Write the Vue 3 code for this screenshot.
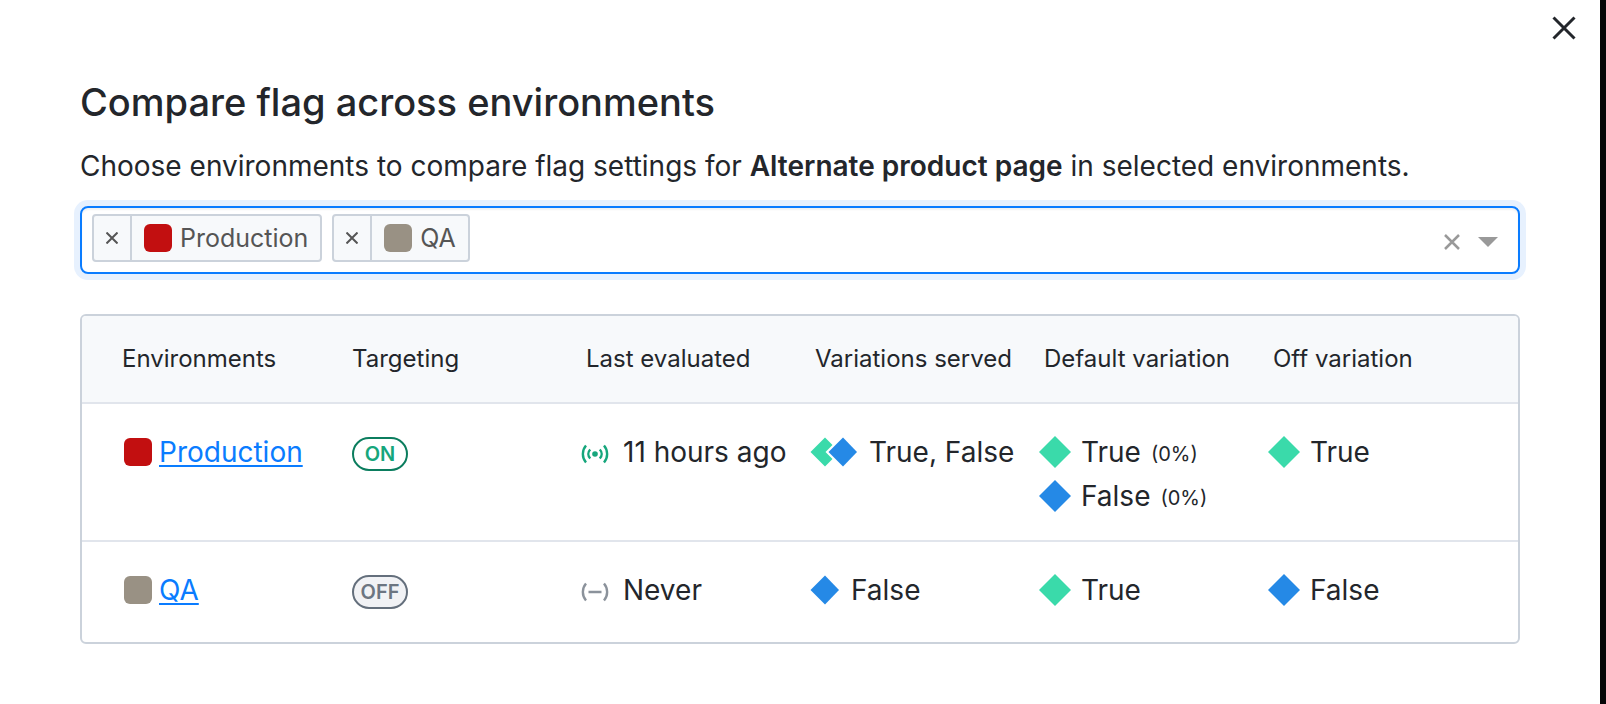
<script setup>
import { ref } from 'vue'

const selected = ref([
  { name: 'Production', tone: 'red' },
  { name: 'QA', tone: 'taupe' },
])

const columns = [
  'Environments',
  'Targeting',
  'Last evaluated',
  'Variations served',
  'Default variation',
  'Off variation',
]

const rows = [
  {
    name: 'Production',
    tone: 'red',
    on: true,
    evaluated: '11 hours ago',
    served: [
      { name: 'True', tone: 'green' },
      { name: 'False', tone: 'blue' },
    ],
    fallthrough: [
      { name: 'True', tone: 'green', share: '(0%)' },
      { name: 'False', tone: 'blue', share: '(0%)' },
    ],
    off: { name: 'True', tone: 'green' },
  },
  {
    name: 'QA',
    tone: 'taupe',
    on: false,
    evaluated: 'Never',
    served: [{ name: 'False', tone: 'blue' }],
    fallthrough: [{ name: 'True', tone: 'green' }],
    off: { name: 'False', tone: 'blue' },
  },
]

function remove(name) {
  selected.value = selected.value.filter((env) => env.name !== name)
}
</script>

<template>
  <main class="dialog" role="dialog" aria-labelledby="title">
    <button class="close" type="button" aria-label="Close">
      <svg viewBox="0 0 24 24" width="24" height="24"><path d="M1.5 1.5 22.5 22.5M22.5 1.5 1.5 22.5" /></svg>
    </button>

    <h1 id="title">Compare flag across environments</h1>
    <label class="intro" for="env-input">
      Choose environments to compare flag settings for
      <strong>Alternate product page</strong> in selected environments.
    </label>

    <div class="select">
      <span v-for="env in selected" :key="env.name" class="chip">
        <button class="chip-remove" type="button" :aria-label="`Remove ${env.name}`" @click="remove(env.name)">
          <svg viewBox="0 0 12 12" width="12" height="12"><path d="M.5.5 11.5 11.5M11.5.5.5 11.5" /></svg>
        </button>
        <span class="chip-label">
          <span class="swatch" :class="env.tone"></span>
          {{ env.name }}
        </span>
      </span>
      <input id="env-input" class="search" type="text" role="combobox" aria-expanded="false" autocomplete="off" />
      <button class="tool" type="button" aria-label="Clear all" @click="selected = []">
        <svg viewBox="0 0 16 16" width="16" height="16"><path d="M1 1 15 15M15 1 1 15" /></svg>
      </button>
      <button class="tool arrow" type="button" aria-label="Open list">
        <svg viewBox="0 0 20 10" width="20" height="10"><path d="M0 0h20L10 10z" /></svg>
      </button>
    </div>

    <div class="frame">
      <table>
        <thead>
          <tr>
            <th v-for="column in columns" :key="column" scope="col">{{ column }}</th>
          </tr>
        </thead>
        <tbody>
          <tr v-for="row in rows" :key="row.name">
            <td>
              <span class="line env">
                <span class="swatch" :class="row.tone"></span>
                <a href="#">{{ row.name }}</a>
              </span>
            </td>
            <td>
              <span class="line targeting">
                <span class="pill" :class="{ on: row.on }">{{ row.on ? 'ON' : 'OFF' }}</span>
              </span>
            </td>
            <td>
              <span class="line evaluated">
                <svg v-if="row.on" class="signal live" viewBox="0 0 28 20" width="28" height="20">
                  <circle cx="14" cy="10" r="2.8" />
                  <path d="M5 1.5C.8 6.5.8 13.5 5 18.5M23 1.5C27.2 6.5 27.2 13.5 23 18.5M9.2 5.5C6.7 8.2 6.7 11.8 9.2 14.5M18.8 5.5C21.3 8.2 21.3 11.8 18.8 14.5" />
                </svg>
                <svg v-else class="signal" viewBox="0 0 28 20" width="28" height="20">
                  <path d="M5 1.5C.8 6.5.8 13.5 5 18.5M23 1.5C27.2 6.5 27.2 13.5 23 18.5M7.5 10h13" />
                </svg>
                {{ row.evaluated }}
              </span>
            </td>
            <td>
              <span class="line served">
                <svg v-if="row.served.length > 1" viewBox="0 0 47 30" width="47" height="30">
                  <path :class="row.served[0].tone" d="M15 .5 29.5 15 15 29.5.5 15z" />
                  <path class="gap" d="M33 -2.5 50.5 15 33 32.5 15.5 15z" />
                  <path :class="row.served[1].tone" d="M33 .5 47 15 33 29.5 18.5 15z" />
                </svg>
                <svg v-else viewBox="0 0 29 30" width="29" height="30">
                  <path :class="row.served[0].tone" d="M15 .5 29 15 15 29.5.5 15z" />
                </svg>
                {{ row.served.map((variation) => variation.name).join(', ') }}
              </span>
            </td>
            <td>
              <span v-for="variation in row.fallthrough" :key="variation.name" class="line variation">
                <svg viewBox="0 0 32 32" width="32" height="32"><path :class="variation.tone" d="M16 0 32 16 16 32 0 16z" /></svg>
                {{ variation.name }}
                <small v-if="variation.share">{{ variation.share }}</small>
              </span>
            </td>
            <td>
              <span class="line variation">
                <svg viewBox="0 0 32 32" width="32" height="32"><path :class="row.off.tone" d="M16 0 32 16 16 32 0 16z" /></svg>
                {{ row.off.name }}
              </span>
            </td>
          </tr>
        </tbody>
      </table>
    </div>
  </main>
</template>

<style>
html,
body {
  background: #fff;
}
</style>

<style scoped>
.dialog {
  position: relative;
  box-sizing: border-box;
  min-height: 100vh;
  padding: 80px 80px 40px;
  border-right: 6px solid #060708;
  background: #fff;
  color: #23262b;
  font-family: Inter, 'Liberation Sans', sans-serif;
  font-size: 28px;
  line-height: 44px;
}

button {
  display: inline-flex;
  align-items: center;
  justify-content: center;
  flex: none;
  padding: 0;
  border: 0;
  background: none;
  cursor: pointer;
}

svg {
  display: block;
  flex: none;
}

.close {
  position: absolute;
  top: 8px;
  right: 16px;
  width: 40px;
  height: 40px;
}

.close path {
  fill: none;
  stroke: #23262b;
  stroke-width: 3;
}

h1 {
  margin: 0 0 20px;
  font-size: 38px;
  font-weight: 500;
  line-height: 44px;
}

.intro {
  display: block;
  margin-bottom: 18px;
}

strong {
  font-weight: 600;
}

.select {
  display: flex;
  align-items: center;
  box-sizing: border-box;
  min-height: 68px;
  padding: 6px 20px 10px 10px;
  border: 2px solid #0a7cff;
  border-radius: 8px;
  box-shadow: 0 0 0 6px #e7f1fe, inset 0 2px 2px #f2f2f2;
}

.chip {
  display: inline-flex;
  box-sizing: border-box;
  height: 48px;
  margin-right: 10px;
  border: 2px solid #cbd2db;
  border-radius: 4px;
  background: #f7f9fb;
  color: #555;
  font-size: 25px;
}

.chip-remove {
  width: 38px;
  border-right: 2px solid #cbd2db;
}

.chip-remove path {
  fill: none;
  stroke: #555;
  stroke-width: 2;
}

.chip-label {
  display: flex;
  align-items: center;
  gap: 8px;
  padding: 0 12px;
}

.swatch {
  flex: none;
  width: 28px;
  height: 28px;
  border-radius: 6px;
}

.swatch.red {
  background: #c20f10;
}

.swatch.taupe {
  background: #999184;
}

.search {
  flex: 1;
  min-width: 0;
  height: 40px;
  padding: 0;
  border: 0;
  outline: 0;
  background: none;
  color: inherit;
  font: inherit;
}

.tool {
  height: 40px;
  margin-top: 8px;
}

.tool path {
  fill: none;
  stroke: #999;
  stroke-width: 2.5;
}

.tool.arrow {
  margin-left: 18px;
}

.tool.arrow path {
  fill: #999;
  stroke: none;
}

.frame {
  margin-top: 40px;
  overflow: hidden;
  border: 2px solid #cbd2db;
  border-radius: 6px;
}

table {
  width: 100%;
  border-collapse: separate;
  border-spacing: 0;
  table-layout: fixed;
}

th {
  box-sizing: border-box;
  width: 229px;
  height: 88px;
  padding: 0 0 0 5px;
  border-bottom: 2px solid #e1e5ec;
  background: #f7f9fb;
  font-size: 24px;
  font-weight: 400;
  text-align: left;
  white-space: nowrap;
}

th:first-child {
  width: 270px;
  padding-left: 40px;
}

th:nth-child(2) {
  padding-left: 0;
}

th:last-child {
  width: auto;
}

td {
  padding: 26px 0 22px;
  vertical-align: top;
  white-space: nowrap;
}

td:first-child {
  padding-left: 42px;
}

tbody tr:not(:last-child) td {
  border-bottom: 2px solid #e1e5ec;
}

tbody tr:last-child td {
  padding-bottom: 30px;
}

.line {
  display: flex;
  align-items: center;
  height: 44px;
}

.env {
  gap: 7px;
}

.variation {
  gap: 10px;
}

.evaluated {
  gap: 14px;
}

.served {
  gap: 12px;
}

a {
  color: #0a7cff;
  text-decoration-thickness: 2px;
  text-underline-offset: 3px;
}

small {
  padding-top: 4px;
  font-size: 20px;
}

.targeting {
  padding-top: 4px;
}

.pill {
  box-sizing: border-box;
  width: 56px;
  height: 34px;
  border: 2px solid #646f7c;
  border-radius: 17px;
  background: #f1f2f5;
  color: #6c7581;
  font-size: 20px;
  font-weight: 600;
  line-height: 30px;
  text-align: center;
}

.pill.on {
  border-color: #0b7d5e;
  background: #fff;
  color: #16a67c;
}

.targeting,
.signal {
  box-sizing: border-box;
}

.signal {
  margin-top: 4px;
}

.signal path {
  fill: none;
  stroke: #8b929b;
  stroke-width: 2.4;
}

.signal.live path {
  stroke: #16a67c;
}

.signal.live circle {
  fill: #16a67c;
}

path.green {
  fill: #3adaaa;
}

path.blue {
  fill: #2589e6;
}

path.gap {
  fill: #fff;
}
</style>
